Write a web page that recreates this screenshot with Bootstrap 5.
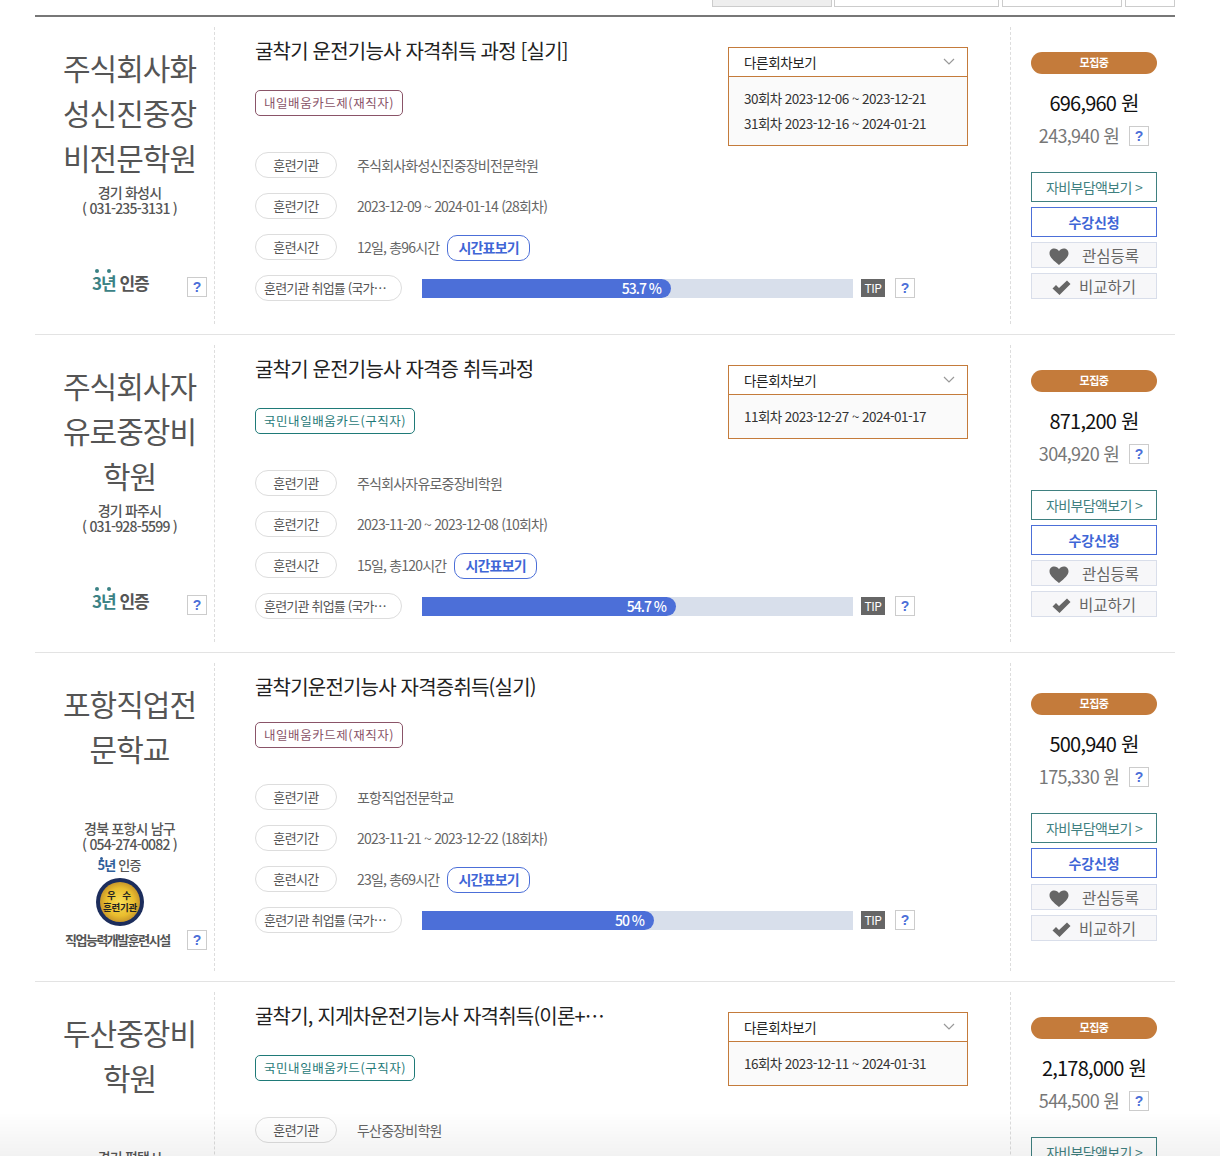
<!DOCTYPE html>
<html lang="ko">
<head>
<meta charset="utf-8">
<title>훈련과정 목록</title>
<link rel="stylesheet" href="https://cdn.jsdelivr.net/npm/bootstrap@5.3.0/dist/css/bootstrap.min.css">
<style>
html,body{height:1156px;overflow:hidden;background:#fff}
body{font-family:"Noto Sans CJK KR","Noto Sans",sans-serif;color:#555;letter-spacing:-.8px;font-size:14px;padding:0 45px 0 35px}
.fade-bottom{position:fixed;left:0;right:0;bottom:0;height:44px;pointer-events:none;background:linear-gradient(rgba(0,0,0,0),rgba(0,0,0,.05))}
.tab-strip{height:15px;gap:3px}
.tab-box{height:7px;border:1px solid #ccc;border-top:0;background:#fff}
.tab-on{background:#eee;margin-right:-1px}
.w-a{width:120px}.w-b{width:165px}.w-c{width:120px}.w-d{width:50px}
.list-top{border-top:2px solid #777}
.course{height:318px;border-bottom:1px solid #e3e3e3;padding:10px 0}
.course-tall{height:329px}
.col-org{width:180px;border-right:1px dashed #ddd;text-align:center}
.org-name{height:140px;padding:18px 0 0 10px;font-size:30px;line-height:45px;color:#555;letter-spacing:-1px;box-sizing:content-box}
.org-loc{padding-left:10px;margin-top:-1px;font-size:14px;line-height:16px;font-weight:500;color:#555;letter-spacing:-.8px}
.cert-line{margin-top:auto;padding-left:57px;padding-bottom:27px;padding-right:7px}
.cert-txt{position:relative;margin-top:-8px;font-size:17px;line-height:20px;font-weight:700;color:#555;letter-spacing:-1px}
.yr3{color:#3b8285}.yr5{color:#2f5f9b;font-weight:700}
.dot-a,.dot-b{position:absolute;top:-4px;width:4px;height:4px;border-radius:50%;background:#3b8285}
.dot-a{left:3px}.dot-b{left:15px}
.cert-five{margin-top:5px;padding-right:11px;text-align:center;font-size:13px;line-height:16px;font-weight:500;position:relative}
.dot-c{position:absolute;top:0;left:65px;width:3px;height:3px;border-radius:50%;background:#2f5f9b}
.seal{display:block;margin:5px 0 0 61px}
.facility{padding:4px 7px 0 30px}
.facility span:first-child{font-size:13px;font-weight:700;letter-spacing:-1.5px}
.qmark{flex:none;display:inline-flex;align-items:center;justify-content:center;width:20px;height:20px;border:1px solid #ccc;background:#fff;color:#4c6fd8;font:700 14px/1 "Liberation Sans",sans-serif;letter-spacing:0}
.col-main{width:796px;border-right:1px dashed #ddd;padding-left:40px;position:relative}
.course-title{height:30px;margin-top:9px;font-size:20px;line-height:30px;color:#222;letter-spacing:-.8px;font-weight:400;width:360px;white-space:nowrap;overflow:hidden;text-overflow:ellipsis}
.title-wide{width:460px}
.chip-tag{display:inline-block;margin-top:24px;height:26px;line-height:24px;padding:0 8px;border:1px solid;border-radius:5px;font-size:12.5px;letter-spacing:.55px}
.chip-work{color:#8a5468;border-color:#8a5468}
.chip-seek{color:#1f7a78;border-color:#1f7a78}
.chip-up{margin-top:20px}
.info-set{margin-top:36px;display:flex;flex-direction:column;gap:15px}
.info-line{height:26px;display:flex;align-items:center;color:#666;font-size:14px}
.info-pill{flex:none;width:82px;height:26px;line-height:24px;border:1px solid #ddd;border-radius:13px;background:#fff;text-align:center;color:#555;font-size:13px;margin-right:20px;letter-spacing:-.6px}
.pill-long{width:147px;padding:0 8px;margin-right:20px;white-space:nowrap;overflow:hidden;text-overflow:ellipsis;text-align:left;letter-spacing:-.8px}
.time-link{display:inline-block;margin:2px 0 0 8px;height:26px;line-height:23px;padding:0 10px;border:1px solid #4c6fd8;border-radius:10px;color:#3f66d6;font-weight:700;font-size:14px;background:#fff;text-decoration:none}
.bar-track{width:431px;height:19px;background:#d8dfeb}
.bar-fill{height:19px;background:#4c6fd8;border-radius:0 10px 10px 0;color:#fff;font-weight:500;font-size:14px;line-height:19px;text-align:right;padding-right:10px;letter-spacing:-1px}
.tip-tag{margin:0 10px 0 8px;width:24px;height:18px;background:#666;color:#fff;font-size:12px;line-height:18px;text-align:center;letter-spacing:-.4px}
.round-box{position:absolute;left:513px;top:20px;width:240px;border:1px solid #c47b3b;background:#fafafa;color:#333;font-size:14px}
.round-head{height:29px;background:#fff;border-bottom:1px solid #c47b3b;padding:0 12px 0 15px;line-height:27px;color:#222;font-size:13.5px;letter-spacing:-.35px}
.round-list{padding:9px 15px 9px;line-height:25px;font-size:13.5px;letter-spacing:-.55px;white-space:nowrap}
.col-side{width:164px;padding:25px 18px 0 20px;text-align:center}
.side-tall{padding-top:30px}
.status-pill{height:22px;line-height:21px;border-radius:11px;background:#c47b3b;color:#fff;font-size:11px;font-weight:700;letter-spacing:-.4px}
.price-main{margin-top:14px;font-size:20px;line-height:30px;color:#111;letter-spacing:-.8px;font-weight:400}
.price-sub{margin-top:2px;height:30px;gap:10px;font-size:18px;color:#777;letter-spacing:-.7px}
.price-sub .qmark{margin-top:2px}
.act-btn{display:block;width:126px;margin-top:5px;border-radius:0;padding:0;font-size:14px;text-align:center;letter-spacing:-.65px}
.act-teal{height:30px;line-height:28px;margin-top:22px;border:1px solid #3f8080;color:#3f8080;background:#fff}
.act-blue{height:30px;line-height:28px;border:1px solid #4c6fd8;color:#3f66d6;background:#fff;font-weight:700;letter-spacing:-.1px}
.act-gray{height:26px;line-height:24px;border:1px solid #d9deea;background:#f7f7f9;color:#666;font-size:15.5px;letter-spacing:0}
.side-tall .act-blue + .act-gray{margin-top:6px}
.ico-heart{vertical-align:-3px;margin-right:13px}
.ico-check{vertical-align:-2px;margin-right:8px}
</style>
</head>
<body>
<div class="tab-strip d-flex justify-content-end">
  <div class="tab-box tab-on w-a"></div><div class="tab-box w-b"></div><div class="tab-box w-c"></div><div class="tab-box w-d"></div>
</div>
<div class="list-top">

<div class="course d-flex">
  <div class="col-org d-flex flex-column">
    <div class="org-name">주식회사화<br>성신진중장<br>비전문학원</div>
    <div class="org-loc">경기 화성시<br>( 031-235-3131 )</div>
    <div class="cert-line d-flex justify-content-between align-items-center"><span class="cert-txt"><i class="dot-a"></i><i class="dot-b"></i><span class="yr3">3년</span> 인증</span><span class="qmark">?</span></div>
  </div>
  <div class="col-main">
    <div class="course-title title-wide">굴착기 운전기능사 자격취득 과정 [실기]</div>
    <span class="chip-tag chip-work">내일배움카드제(재직자)</span>
    <div class="info-set">
      <div class="info-line"><span class="info-pill">훈련기관</span>주식회사화성신진중장비전문학원</div>
      <div class="info-line"><span class="info-pill">훈련기간</span>2023-12-09 ~ 2024-01-14 (28회차)</div>
      <div class="info-line"><span class="info-pill">훈련시간</span>12일, 총96시간<a class="time-link" href="#">시간표보기</a></div>
      <div class="info-line"><span class="info-pill pill-long">훈련기관 취업률 (국가직무능력)</span><div class="bar-track"><div class="bar-fill" style="width:249px">53.7 %</div></div><span class="tip-tag">TIP</span><span class="qmark">?</span></div>
    </div>
    <div class="round-box">
      <div class="round-head d-flex justify-content-between align-items-center">다른회차보기<svg width="12" height="8" viewBox="0 0 12 8"><path d="M1 1l5 5 5-5" fill="none" stroke="#999" stroke-width="1.2"/></svg></div>
      <div class="round-list">30회차 2023-12-06 ~ 2023-12-21<br>31회차 2023-12-16 ~ 2024-01-21</div>
    </div>
  </div>
  <div class="col-side">
    <div class="status-pill">모집중</div>
    <div class="price-main">696,960 원</div>
    <div class="price-sub d-flex justify-content-center align-items-center">243,940 원<span class="qmark">?</span></div>
    <a class="btn act-btn act-teal" href="#">자비부담액보기 &gt;</a>
    <a class="btn act-btn act-blue" href="#">수강신청</a>
    <a class="btn act-btn act-gray" href="#"><svg class="ico-heart" width="20" height="17" viewBox="0 0 20 17"><path d="M10 17C4 12 .5 9 .5 5.2.5 2.4 2.6.5 5.2.5 7.2.5 9 1.5 10 3.2 11 1.5 12.800.5 14.8.5c2.600 0 4.700 1.900 4.700 4.700C19.500 9 16 12 10 17z" fill="#666"/></svg>관심등록</a>
    <a class="btn act-btn act-gray" href="#"><svg class="ico-check" width="19" height="15" viewBox="0 0 19 15"><path d="M.5 8.500L4 5l3 3L15 .5l3.500 3.500-11 11z" fill="#666"/></svg>비교하기</a>
  </div>
</div>

<div class="course d-flex">
  <div class="col-org d-flex flex-column">
    <div class="org-name">주식회사자<br>유로중장비<br>학원</div>
    <div class="org-loc">경기 파주시<br>( 031-928-5599 )</div>
    <div class="cert-line d-flex justify-content-between align-items-center"><span class="cert-txt"><i class="dot-a"></i><i class="dot-b"></i><span class="yr3">3년</span> 인증</span><span class="qmark">?</span></div>
  </div>
  <div class="col-main">
    <div class="course-title title-wide">굴착기 운전기능사 자격증 취득과정</div>
    <span class="chip-tag chip-seek">국민내일배움카드(구직자)</span>
    <div class="info-set">
      <div class="info-line"><span class="info-pill">훈련기관</span>주식회사자유로중장비학원</div>
      <div class="info-line"><span class="info-pill">훈련기간</span>2023-11-20 ~ 2023-12-08 (10회차)</div>
      <div class="info-line"><span class="info-pill">훈련시간</span>15일, 총120시간<a class="time-link" href="#">시간표보기</a></div>
      <div class="info-line"><span class="info-pill pill-long">훈련기관 취업률 (국가직무능력)</span><div class="bar-track"><div class="bar-fill" style="width:254px">54.7 %</div></div><span class="tip-tag">TIP</span><span class="qmark">?</span></div>
    </div>
    <div class="round-box">
      <div class="round-head d-flex justify-content-between align-items-center">다른회차보기<svg width="12" height="8" viewBox="0 0 12 8"><path d="M1 1l5 5 5-5" fill="none" stroke="#999" stroke-width="1.2"/></svg></div>
      <div class="round-list">11회차 2023-12-27 ~ 2024-01-17</div>
    </div>
  </div>
  <div class="col-side">
    <div class="status-pill">모집중</div>
    <div class="price-main">871,200 원</div>
    <div class="price-sub d-flex justify-content-center align-items-center">304,920 원<span class="qmark">?</span></div>
    <a class="btn act-btn act-teal" href="#">자비부담액보기 &gt;</a>
    <a class="btn act-btn act-blue" href="#">수강신청</a>
    <a class="btn act-btn act-gray" href="#"><svg class="ico-heart" width="20" height="17" viewBox="0 0 20 17"><path d="M10 17C4 12 .5 9 .5 5.2.5 2.4 2.6.5 5.2.5 7.2.5 9 1.5 10 3.2 11 1.5 12.800.5 14.8.5c2.600 0 4.700 1.900 4.700 4.700C19.500 9 16 12 10 17z" fill="#666"/></svg>관심등록</a>
    <a class="btn act-btn act-gray" href="#"><svg class="ico-check" width="19" height="15" viewBox="0 0 19 15"><path d="M.5 8.500L4 5l3 3L15 .5l3.500 3.500-11 11z" fill="#666"/></svg>비교하기</a>
  </div>
</div>

<div class="course course-tall d-flex">
  <div class="col-org d-flex flex-column">
    <div class="org-name">포항직업전<br>문학교</div>
    <div class="org-loc">경북 포항시 남구<br>( 054-274-0082 )</div>
    <div class="cert-five"><i class="dot-c"></i><span class="yr5">5년</span> 인증</div>
    <svg class="seal" width="48" height="48" viewBox="0 0 48 48"><defs><radialGradient id="gold"><stop offset="0" stop-color="#f7dc55"/><stop offset=".7" stop-color="#e9bd2e"/><stop offset="1" stop-color="#c9982a"/></radialGradient></defs><circle cx="24" cy="24" r="24" fill="#1c2d5c"/><circle cx="24" cy="24" r="20" fill="url(#gold)"/><text x="24" y="21" text-anchor="middle" font-size="9.500" font-weight="700" fill="#222" letter-spacing="2">우 수</text><text x="24" y="33" text-anchor="middle" font-size="9.500" font-weight="700" fill="#222" letter-spacing="-.2">훈련기관</text></svg>
    <div class="facility d-flex justify-content-between align-items-center"><span>직업능력개발훈련시설</span><span class="qmark">?</span></div>
  </div>
  <div class="col-main">
    <div class="course-title title-wide">굴착기운전기능사 자격증취득(실기)</div>
    <span class="chip-tag chip-work chip-up">내일배움카드제(재직자)</span>
    <div class="info-set">
      <div class="info-line"><span class="info-pill">훈련기관</span>포항직업전문학교</div>
      <div class="info-line"><span class="info-pill">훈련기간</span>2023-11-21 ~ 2023-12-22 (18회차)</div>
      <div class="info-line"><span class="info-pill">훈련시간</span>23일, 총69시간<a class="time-link" href="#">시간표보기</a></div>
      <div class="info-line"><span class="info-pill pill-long">훈련기관 취업률 (국가직무능력)</span><div class="bar-track"><div class="bar-fill" style="width:232px">50 %</div></div><span class="tip-tag">TIP</span><span class="qmark">?</span></div>
    </div>
  </div>
  <div class="col-side side-tall">
    <div class="status-pill">모집중</div>
    <div class="price-main">500,940 원</div>
    <div class="price-sub d-flex justify-content-center align-items-center">175,330 원<span class="qmark">?</span></div>
    <a class="btn act-btn act-teal" href="#">자비부담액보기 &gt;</a>
    <a class="btn act-btn act-blue" href="#">수강신청</a>
    <a class="btn act-btn act-gray" href="#"><svg class="ico-heart" width="20" height="17" viewBox="0 0 20 17"><path d="M10 17C4 12 .5 9 .5 5.2.5 2.4 2.6.5 5.2.5 7.2.5 9 1.5 10 3.2 11 1.5 12.800.5 14.8.5c2.600 0 4.700 1.900 4.700 4.700C19.500 9 16 12 10 17z" fill="#666"/></svg>관심등록</a>
    <a class="btn act-btn act-gray" href="#"><svg class="ico-check" width="19" height="15" viewBox="0 0 19 15"><path d="M.5 8.500L4 5l3 3L15 .5l3.500 3.500-11 11z" fill="#666"/></svg>비교하기</a>
  </div>
</div>

<div class="course d-flex">
  <div class="col-org d-flex flex-column">
    <div class="org-name">두산중장비<br>학원</div>
    <div class="org-loc">경기 평택시</div>
  </div>
  <div class="col-main">
    <div class="course-title">굴착기, 지게차운전기능사 자격취득(이론+실기)</div>
    <span class="chip-tag chip-seek">국민내일배움카드(구직자)</span>
    <div class="info-set">
      <div class="info-line"><span class="info-pill">훈련기관</span>두산중장비학원</div>
    </div>
    <div class="round-box">
      <div class="round-head d-flex justify-content-between align-items-center">다른회차보기<svg width="12" height="8" viewBox="0 0 12 8"><path d="M1 1l5 5 5-5" fill="none" stroke="#999" stroke-width="1.2"/></svg></div>
      <div class="round-list">16회차 2023-12-11 ~ 2024-01-31</div>
    </div>
  </div>
  <div class="col-side">
    <div class="status-pill">모집중</div>
    <div class="price-main">2,178,000 원</div>
    <div class="price-sub d-flex justify-content-center align-items-center">544,500 원<span class="qmark">?</span></div>
    <a class="btn act-btn act-teal" href="#">자비부담액보기 &gt;</a>
  </div>
</div>

</div>
<div class="fade-bottom"></div>
<script src="https://cdn.jsdelivr.net/npm/bootstrap@5.3.0/dist/js/bootstrap.bundle.min.js"></script>
</body>
</html>
